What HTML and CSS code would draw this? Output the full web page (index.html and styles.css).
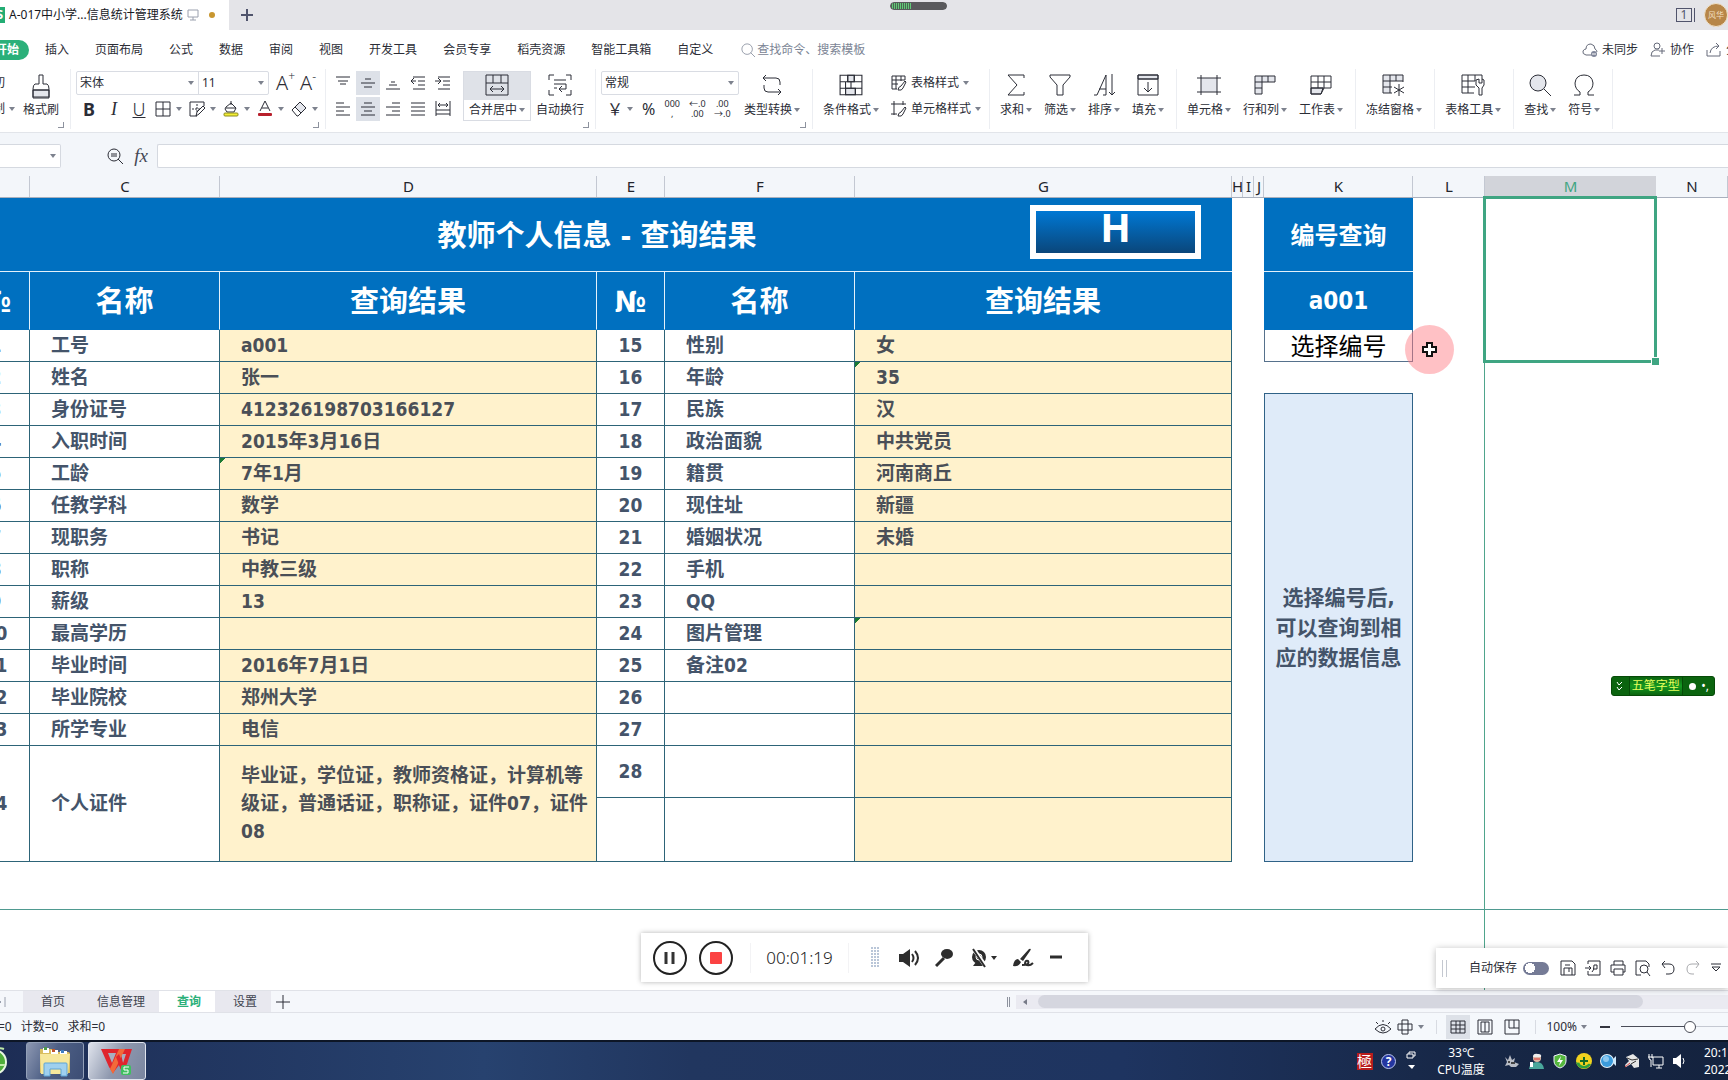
FILE: index.html
```html
<!DOCTYPE html>
<html lang="zh-CN">
<head>
<meta charset="utf-8">
<title>A-017中小学教师信息统计管理系统</title>
<link rel="stylesheet" href="styles.css">
</head>
<body>
<svg class="defs" aria-hidden="true">
  <symbol id="brush" viewBox="0 0 22 26"><path fill="#e4e6ec" d="M3 17h16v7H3z"/><path d="M9 2h4v9h4q2 1 2 5v9H3v-9q0-4 2-5h4zM3 17h16"/></symbol>
  <symbol id="borders" viewBox="0 0 16 16"><path d="M1 1h14v14H1zM8 1v14M1 8h14"/></symbol>
  <symbol id="cellpen" viewBox="0 0 16 16"><path d="M8 15H1V1h14v4"/><path stroke-dasharray="2 1" d="M8 3v9M3 8h8"/><path fill="#fff" d="M7 15l1-4 6-6 2 2-6 6z"/></symbol>
  <symbol id="bucket" viewBox="0 0 16 16"><path d="M8 0v4M3 6l5-4 5 5-2 4H4L2 8zM3 7h10"/><rect x="1" y="12" width="14" height="3" rx="1" fill="#f3ee35" stroke="#8c8a20"/></symbol>
  <symbol id="fontcolor" viewBox="0 0 16 16"><path d="M3 10L8 0l5 10M5 7h6"/><rect x="1" y="12" width="14" height="3" rx="1" fill="#b8202c" stroke="none"/></symbol>
  <symbol id="eraser" viewBox="0 0 16 16"><path fill="#e4e6ec" d="M4 6l5-5 6 6-5 5z"/><path d="M1 9l8-8 6 6-8 8H6zM4 6l6 6"/></symbol>
  <symbol id="al-top" viewBox="0 0 16 16"><path d="M1 2h14M3 6h10M5 9h6"/></symbol>
  <symbol id="al-mid" viewBox="0 0 16 16"><path d="M5 4h6M1 8h14M4 12h8"/></symbol>
  <symbol id="al-bot" viewBox="0 0 16 16"><path d="M6 7h4M4 10h8M1 14h14"/></symbol>
  <symbol id="outdent" viewBox="0 0 16 16"><path d="M3 2h12M8 6h7M8 10h7M3 14h12M1 6h5M4 3L1 6l3 3"/></symbol>
  <symbol id="indent" viewBox="0 0 16 16"><path d="M3 2h12M8 6h7M8 10h7M3 14h12M0 6h5M3 3l3 3-3 3"/></symbol>
  <symbol id="al-left" viewBox="0 0 16 16"><path d="M1 2h8M1 6h14M1 10h8M1 14h14"/></symbol>
  <symbol id="al-cen" viewBox="0 0 16 16"><path d="M4 2h8M1 6h14M4 10h8M1 14h14"/></symbol>
  <symbol id="al-right" viewBox="0 0 16 16"><path d="M7 2h8M1 6h14M7 10h8M1 14h14"/></symbol>
  <symbol id="al-just" viewBox="0 0 16 16"><path d="M1 2h14M1 6h14M1 10h14M1 14h14"/></symbol>
  <symbol id="al-dist" viewBox="0 0 16 16"><path d="M1 0v15M15 0v15M3 4h10M5 2L3 4l2 2M11 2l2 2-2 2M1 9h14M1 13h14"/></symbol>
  <symbol id="merge" viewBox="0 0 24 22"><path d="M1 1h22v20H1zM1 9h22M8 1v8M16 1v8M5 15h14M8 12l-3 3 3 3M16 12l3 3-3 3"/></symbol>
  <symbol id="wrap" viewBox="0 0 24 22"><path d="M1 6V1h5M18 1h5v5M1 16v5h5M18 21h5v-5M6 6h12M6 10h12v5h-6M6 14h3M14 12l-3 3 3 3"/></symbol>
  <symbol id="convert" viewBox="0 0 22 22"><path d="M5 1L2 4l3 3M2 4h13q4 0 4 4v3M17 21l3-3-3-3M20 18H7q-4 0-4-4v-3"/></symbol>
  <symbol id="condfmt" viewBox="0 0 22 20"><path fill="#e4e6ec" d="M8 1h6v6H8zM6 13h9v6H6z"/><path d="M1 1h20v18H1zM1 7h20M1 13h20M8 1v6M14 1v6M6 7v6M11 7v6M6 13v6M15 13v6"/></symbol>
  <symbol id="tblstyle" viewBox="0 0 16 16"><path d="M6 14H1V1h13v4M1 5h13M1 9h6M5 1v13M10 1v5"/><path fill="#fff" d="M7 15q0-3 3-4l4-5 1 1-3 6q-1 3-5 2z"/></symbol>
  <symbol id="cellstyle" viewBox="0 0 16 16"><path d="M3 0v14M0 3h15M12 0v4M0 13h6"/><path fill="#fff" d="M7 15q0-3 3-4l4-5 1 1-3 6q-1 3-5 2z"/></symbol>
  <symbol id="sum" viewBox="0 0 22 22"><path d="M19 4V1H3l9 10L3 21h16v-3"/></symbol>
  <symbol id="filter" viewBox="0 0 22 22"><path d="M1 1h20v2l-7 8v10H8V11L1 3z"/></symbol>
  <symbol id="sort" viewBox="0 0 22 22"><path d="M1 21h3M4 21L13 1v20h-3M6 15h7M19 0v21M16 18l3 3 3-3"/></symbol>
  <symbol id="fill" viewBox="0 0 22 22"><path fill="#e4e6ec" d="M1 1h20v4H1z"/><path d="M1 1h20v20H1zM1 5h20M11 8v10M7 14l4 4 4-4"/></symbol>
  <symbol id="cell" viewBox="0 0 24 22"><path fill="#e4e6ec" stroke="none" d="M4 4h16v14H4z"/><path d="M4 1v20M20 1v20M0 4h24M0 18h24"/></symbol>
  <symbol id="rowcol" viewBox="0 0 22 22"><path fill="#e4e6ec" d="M1 2h20v6H8v12H1z"/><path d="M1 8h7M1 14h7M8 2v6M14 2v6"/></symbol>
  <symbol id="worksheet" viewBox="0 0 22 22"><path fill="#e4e6ec" d="M1 14h12l-2 6H1z"/><path d="M1 2h20v12H1zM1 14v6h10l3-6M1 8h20M8 2v12M14 2v12"/></symbol>
  <symbol id="freeze" viewBox="0 0 24 22"><path fill="#e4e6ec" stroke="none" d="M1 1h20v6H8v12H1z"/><path d="M21 8V1H1v18h9M1 7h20M1 13h9M8 1v18M14 1v6M17 10v12M12 13l10 6M12 19l10-6"/></symbol>
  <symbol id="tbltool" viewBox="0 0 24 22"><path d="M21 5V1H1v18h12M1 7h13M1 13h13M7 1v18M14 1v6"/><path fill="#fff" d="M15 6v5l3 3v7h3v-7l2-3V6l-2-1v4h-3V5z"/></symbol>
  <symbol id="find" viewBox="0 0 22 22"><circle cx="9" cy="9" r="8" fill="#e4e6ec"/><path d="M15 15l7 7"/></symbol>
  <symbol id="omega" viewBox="0 0 22 22"><path d="M1 21h6v-3Q2 15 2 9q1-8 9-8t9 8q0 6-5 9v3h6"/></symbol>
  <symbol id="lens" viewBox="0 0 16 16"><circle cx="7" cy="7" r="6"/><path d="M11 11l5 5"/></symbol>
  <symbol id="lens-eq" viewBox="0 0 16 16"><circle cx="7" cy="7" r="6"/><path d="M11 11l5 5M4 6h6M4 8h6"/></symbol>
  <symbol id="cloud" viewBox="0 0 16 16"><path d="M10 13H4Q0 12 1 9q1-2 3-2 0-5 5-5 4 1 4 5 2 1 2 3"/><circle cx="12" cy="12" r="3" fill="#80869a" stroke="none"/><path stroke="#fff" d="M10 12h4"/></symbol>
  <symbol id="person" viewBox="0 0 16 16"><circle cx="7" cy="4" r="3"/><path d="M10 14H1q0-5 4-6h4M12 6v6M9 9h6"/></symbol>
  <symbol id="share" viewBox="0 0 16 16"><path d="M1 8v6h13V9M4 11q1-7 9-7M10 1l3 3-3 3"/></symbol>
  <symbol id="save" viewBox="0 0 16 16"><path d="M1 1h11l3 3v11H1zM4 15V8h8v7M5 5h5M9 8v4"/></symbol>
  <symbol id="pdf" viewBox="0 0 16 16"><path d="M3 4V1h12v14H3v-4M0 8h6M4 6l2 2-2 2M7 12q2-1 2-7h3v4H8"/></symbol>
  <symbol id="print" viewBox="0 0 16 16"><path d="M4 5V1h9v4M4 12H1V5h14v7h-2M4 9h9v6H4z"/></symbol>
  <symbol id="preview" viewBox="0 0 16 16"><path d="M6 15H1V1h10l3 3v3"/><circle cx="9" cy="9" r="4"/><path d="M12 12l3 4"/></symbol>
  <symbol id="undo" viewBox="0 0 16 16"><path d="M5 1L2 4l3 4M2 4h7q5 0 5 5t-5 5H6"/></symbol>
  <symbol id="redo" viewBox="0 0 16 16"><path d="M11 1l3 3-3 4M14 4H7q-5 0-5 5t5 5h2"/></symbol>
  <symbol id="eye" viewBox="0 0 18 16"><path d="M1 10q8-9 16 0-8 8-16 0zM2 3l2 2M9 1v2M16 3l-2 2"/><circle cx="9" cy="10" r="2"/></symbol>
  <symbol id="cross" viewBox="0 0 16 16"><path d="M5 1h6v14H5zM1 5h14v6H1z"/></symbol>
  <symbol id="v-grid" viewBox="0 0 16 16"><path d="M1 2h14v12H1zM1 6h14M1 10h14M6 2v12M10 2v12"/></symbol>
  <symbol id="v-page" viewBox="0 0 16 16"><path d="M1 1h14v14H1zM4 3h8v10H4zM8 3v10"/></symbol>
  <symbol id="v-break" viewBox="0 0 16 16"><path d="M1 1h14v14H1zM5 1v8h10M10 1v8"/></symbol>
</svg>

<header class="titlebar">
  <div class="doctab">
    <span class="doclogo">S</span>
    <span class="docname">A-017中小学...信息统计管理系统</span>
    <svg class="ic s12 faint" viewBox="0 0 12 12"><path d="M1 1h10v7H1zM6 8v3M3 11h6"/></svg>
    <span class="unsaved"></span>
  </div>
  <button class="newtab" aria-label="新建"><svg class="ic s12 thick" viewBox="0 0 12 12"><path d="M6 0v12M0 6h12"/></svg></button>
  <span class="level"></span>
  <span class="wincount">1</span>
  <span class="avatar">风华</span>
</header>

<nav class="menu">
  <button class="start">开始</button>
  <button>插入</button><button>页面布局</button><button>公式</button><button>数据</button><button>审阅</button><button>视图</button><button>开发工具</button><button>会员专享</button><button>稻壳资源</button><button>智能工具箱</button><button>自定义</button>
  <button class="search"><svg class="ic s14"><use href="#lens"/></svg>查找命令、搜索模板</button>
  <div class="menu-right">
    <button><svg class="ic s16"><use href="#cloud"/></svg>未同步</button>
    <button><svg class="ic s16"><use href="#person"/></svg>协作</button>
    <button><svg class="ic s16"><use href="#share"/></svg>分享</button>
  </div>
</nav>

<section class="ribbon">
  <div class="group clip corner">
    <div class="stack"><button>剪切</button><button>复制<i class="dd"></i></button></div>
    <button class="big"><svg class="ic i26"><use href="#brush"/></svg><span>格式刷</span></button>
  </div>
  <div class="group font corner">
    <div class="line">
      <div class="combo"><label class="sel"><select class="face" aria-label="字体"><option>宋体</option></select></label><label class="sel"><select class="size" aria-label="字号"><option>11</option></select></label></div>
      <button class="sq grow">A<sup>+</sup></button><button class="sq grow">A<sup>-</sup></button>
    </div>
    <div class="line tools">
      <button class="sq bold">B</button><button class="sq ital">I</button><button class="sq under">U</button>
      <button class="drop"><svg class="ic s16"><use href="#borders"/></svg><i class="dd"></i></button>
      <button class="drop"><svg class="ic s16"><use href="#cellpen"/></svg><i class="dd"></i></button>
      <button class="drop"><svg class="ic s16"><use href="#bucket"/></svg><i class="dd"></i></button>
      <button class="drop"><svg class="ic s16"><use href="#fontcolor"/></svg><i class="dd"></i></button>
      <button class="drop"><svg class="ic s16"><use href="#eraser"/></svg><i class="dd"></i></button>
    </div>
  </div>
  <div class="group align corner">
    <div class="aligns">
      <button><svg class="ic s16"><use href="#al-top"/></svg></button><button class="on"><svg class="ic s16"><use href="#al-mid"/></svg></button><button><svg class="ic s16"><use href="#al-bot"/></svg></button><button><svg class="ic s16"><use href="#outdent"/></svg></button><button><svg class="ic s16"><use href="#indent"/></svg></button>
      <button><svg class="ic s16"><use href="#al-left"/></svg></button><button class="on"><svg class="ic s16"><use href="#al-cen"/></svg></button><button><svg class="ic s16"><use href="#al-right"/></svg></button><button><svg class="ic s16"><use href="#al-just"/></svg></button><button><svg class="ic s16"><use href="#al-dist"/></svg></button>
    </div>
    <button class="big merged"><svg class="ic i22"><use href="#merge"/></svg><span>合并居中<i class="dd"></i></span></button>
    <button class="big"><svg class="ic i22"><use href="#wrap"/></svg><span>自动换行</span></button>
  </div>
  <div class="group number corner">
    <div>
      <div class="line"><div class="combo"><label class="sel"><select class="fmt" aria-label="数字格式"><option>常规</option></select></label></div></div>
      <div class="line nums"><button class="yen">￥<i class="dd"></i></button><button class="pct">%</button><button class="dec">000<br>,</button><button class="dec">←.0<br>.00</button><button class="dec">.00<br>→.0</button></div>
    </div>
    <button class="big"><svg class="ic i22"><use href="#convert"/></svg><span>类型转换<i class="dd"></i></span></button>
  </div>
  <div class="group style">
    <button class="big"><svg class="ic i22"><use href="#condfmt"/></svg><span>条件格式<i class="dd"></i></span></button>
    <div class="stack"><button><svg class="ic s16"><use href="#tblstyle"/></svg>表格样式<i class="dd"></i></button><button><svg class="ic s16"><use href="#cellstyle"/></svg>单元格样式<i class="dd"></i></button></div>
  </div>
  <div class="group">
    <button class="big"><svg class="ic i22"><use href="#sum"/></svg><span>求和<i class="dd"></i></span></button>
    <button class="big"><svg class="ic i22"><use href="#filter"/></svg><span>筛选<i class="dd"></i></span></button>
    <button class="big"><svg class="ic i22"><use href="#sort"/></svg><span>排序<i class="dd"></i></span></button>
    <button class="big"><svg class="ic i22"><use href="#fill"/></svg><span>填充<i class="dd"></i></span></button>
  </div>
  <div class="group">
    <button class="big"><svg class="ic i22"><use href="#cell"/></svg><span>单元格<i class="dd"></i></span></button>
    <button class="big"><svg class="ic i22"><use href="#rowcol"/></svg><span>行和列<i class="dd"></i></span></button>
    <button class="big"><svg class="ic i22"><use href="#worksheet"/></svg><span>工作表<i class="dd"></i></span></button>
  </div>
  <div class="group"><button class="big"><svg class="ic i22"><use href="#freeze"/></svg><span>冻结窗格<i class="dd"></i></span></button></div>
  <div class="group"><button class="big"><svg class="ic i22"><use href="#tbltool"/></svg><span>表格工具<i class="dd"></i></span></button></div>
  <div class="group">
    <button class="big"><svg class="ic i22"><use href="#find"/></svg><span>查找<i class="dd"></i></span></button>
    <button class="big"><svg class="ic i22"><use href="#omega"/></svg><span>符号<i class="dd"></i></span></button>
  </div>
</section>

<div class="formula">
  <label class="sel namebox"><select aria-label="名称框"><option></option></select></label>
  <svg class="ic s16"><use href="#lens-eq"/></svg>
  <button class="fx">fx</button>
  <input class="fxinput" type="text" aria-label="编辑栏">
</div>

<main class="sheet">
  <table class="grid">
    <colgroup><col class="c-no"><col class="c-name"><col class="c-val"><col class="c-no"><col class="c-name"><col class="c-val"><col class="c-slim"><col class="c-slim"><col class="c-slim j"><col class="c-k"><col class="c-l"><col class="c-m"><col></colgroup>
    <thead><tr class="letters"><th></th><th>C</th><th>D</th><th>E</th><th>F</th><th>G</th><th>H</th><th>I</th><th>J</th><th>K</th><th>L</th><th class="sel-col">M</th><th>N</th></tr></thead>
    <tbody>
      <tr class="r-title"><td colspan="6" class="title">教师个人信息 - 查询结果<button class="home">H</button></td><td colspan="3" rowspan="16"></td><td class="ktop">编号查询</td><td rowspan="16" class="pb"></td><td rowspan="3" class="picked"></td><td rowspan="16"></td></tr>
      <tr class="r-head"><th>№</th><th>名称</th><th>查询结果</th><th>№</th><th>名称</th><th>查询结果</th><td class="kval">a001</td></tr>
      <tr><td class="n">1</td><td class="f">工号</td><td class="v">a001</td><td class="n">15</td><td class="f">性别</td><td class="v">女</td><td class="kpick">选择编号</td></tr>
      <tr><td class="n">2</td><td class="f">姓名</td><td class="v">张一</td><td class="n">16</td><td class="f">年龄</td><td class="v flag">35</td><td class="kgap"></td><td rowspan="13"></td></tr>
      <tr><td class="n">3</td><td class="f">身份证号</td><td class="v">412326198703166127</td><td class="n">17</td><td class="f">民族</td><td class="v">汉</td><td class="knote" rowspan="13">选择编号后,<br>可以查询到相<br>应的数据信息</td></tr>
      <tr><td class="n">4</td><td class="f">入职时间</td><td class="v">2015年3月16日</td><td class="n">18</td><td class="f">政治面貌</td><td class="v">中共党员</td></tr>
      <tr><td class="n">5</td><td class="f">工龄</td><td class="v flag">7年1月</td><td class="n">19</td><td class="f">籍贯</td><td class="v">河南商丘</td></tr>
      <tr><td class="n">6</td><td class="f">任教学科</td><td class="v">数学</td><td class="n">20</td><td class="f">现住址</td><td class="v">新疆</td></tr>
      <tr><td class="n">7</td><td class="f">现职务</td><td class="v">书记</td><td class="n">21</td><td class="f">婚姻状况</td><td class="v">未婚</td></tr>
      <tr><td class="n">8</td><td class="f">职称</td><td class="v">中教三级</td><td class="n">22</td><td class="f">手机</td><td class="v"></td></tr>
      <tr><td class="n">9</td><td class="f">薪级</td><td class="v">13</td><td class="n">23</td><td class="f">QQ</td><td class="v"></td></tr>
      <tr><td class="n">10</td><td class="f">最高学历</td><td class="v"></td><td class="n">24</td><td class="f">图片管理</td><td class="v flag"></td></tr>
      <tr><td class="n">11</td><td class="f">毕业时间</td><td class="v">2016年7月1日</td><td class="n">25</td><td class="f">备注02</td><td class="v"></td></tr>
      <tr><td class="n">12</td><td class="f">毕业院校</td><td class="v">郑州大学</td><td class="n">26</td><td class="f"></td><td class="v"></td></tr>
      <tr><td class="n">13</td><td class="f">所学专业</td><td class="v">电信</td><td class="n">27</td><td class="f"></td><td class="v"></td></tr>
      <tr class="r-28"><td class="n" rowspan="2">14</td><td class="f" rowspan="2">个人证件</td><td class="v" rowspan="2">毕业证，学位证，教师资格证，计算机等级证，普通话证，职称证，证件07，证件08</td><td class="n">28</td><td class="f"></td><td class="v"></td></tr>
      <tr class="r-29"><td class="n"></td><td class="f"></td><td class="v"></td><td colspan="3"></td><td class="pb"></td><td></td><td></td></tr>
      <tr class="r-end"><td colspan="10"></td><td class="pb"></td><td colspan="2"></td></tr>
      <tr class="r-out"><td colspan="10"></td><td class="pb"></td><td colspan="2"></td></tr>
    </tbody>
  </table>

  <div class="pointer"><svg width="18" height="18" viewBox="0 0 18 18"><path fill="#fff" stroke="#111" stroke-width="2" d="M6 2h5v4h4v5h-4v4H6v-4H2V6h4z"/></svg></div>
  <div class="ime"><svg width="7" height="11" viewBox="0 0 7 11" fill="none" stroke="#fff"><path d="M1 1l2 3 3-3M1 6l2 3 3-3"/></svg><b>五笔字型</b><i></i><span>•,</span></div>
</main>

<div class="recorder">
  <button class="round" aria-label="暂停"><svg width="12" height="14" viewBox="0 0 12 14"><path d="M2 1v12M9 1v12" stroke="#333" stroke-width="3"/></svg></button>
  <button class="round" aria-label="停止"><span class="stop"></span></button>
  <time>00:01:19</time>
  <span class="dots"></span>
  <div class="rec-tools">
    <button><svg width="22" height="20" viewBox="0 0 22 20"><path fill="#2d2d2d" d="M1 6h4l7-5v18l-7-5H1z"/><path fill="none" stroke="#2d2d2d" stroke-width="2" d="M14 6q3 4 0 8M17 3q6 7 0 14"/></svg></button>
    <button><svg width="20" height="20" viewBox="0 0 20 20"><ellipse cx="12" cy="6" rx="6" ry="5" fill="#2d2d2d"/><path d="M5 5q1 6 9 7" stroke="#fff" fill="none"/><path d="M9 10l-8 8" stroke="#2d2d2d" stroke-width="3"/></svg></button>
    <button><svg width="18" height="20" viewBox="0 0 18 20"><circle cx="9" cy="9" r="7" fill="#2d2d2d"/><circle cx="9" cy="9" r="3" fill="#2d2d2d" stroke="#fff"/><path fill="#2d2d2d" d="M3 18l3-4h6l3 4z"/><path d="M3 0l13 19" stroke="#fff" stroke-width="4"/><path d="M3 1l12 18" stroke="#2d2d2d" stroke-width="2"/></svg><i class="dd dark"></i></button>
    <button><svg width="22" height="20" viewBox="0 0 22 20"><path fill="#2d2d2d" d="M17 1q3-1 1 2l-7 10-3-2zM1 18q1-7 5-7l3 3q-2 5-8 4z"/><path fill="none" stroke="#2d2d2d" stroke-width="2" d="M10 17q8 0 6-4-3-1-3 3 4 3 8-1"/></svg></button>
    <button><svg width="14" height="20" viewBox="0 0 14 20"><path d="M1 9h12" stroke="#2d2d2d" stroke-width="3"/></svg></button>
  </div>
</div>

<div class="quick">
  <span class="grip"></span>
  <label class="auto">自动保存<input type="checkbox"></label>
  <button><svg class="ic s16"><use href="#save"/></svg></button><button><svg class="ic s16"><use href="#pdf"/></svg></button><button><svg class="ic s16"><use href="#print"/></svg></button><button><svg class="ic s16"><use href="#preview"/></svg></button><button><svg class="ic s16"><use href="#undo"/></svg></button><button class="off"><svg class="ic s16"><use href="#redo"/></svg></button>
  <button><svg class="ic s12" viewBox="0 0 12 12"><path d="M1 2h10M2 5h8L6 9z"/></svg></button>
</div>

<div class="tabs">
  <span class="last"><svg class="ic s12 faint" viewBox="0 0 12 12"><path d="M1 2l4 4-4 4zM9 1v10"/></svg></span>
  <button>首页</button><button>信息管理</button><button class="cur">查询</button><button>设置</button>
  <button class="add" aria-label="新建工作表"><svg class="ic s14" viewBox="0 0 14 14"><path d="M7 0v14M0 7h14"/></svg></button>
  <span class="split"></span>
  <div class="hscroll"><i class="arrow"></i><span class="thumb"></span></div>
</div>

<footer class="status">
  <p><span>平均值=0</span><span>计数=0</span><span>求和=0</span></p>
  <div class="views">
    <button><svg class="ic i18"><use href="#eye"/></svg></button>
    <button class="drop"><svg class="ic s16"><use href="#cross"/></svg><i class="dd"></i></button>
    <span class="bar"></span>
    <button class="view on"><svg class="ic s16"><use href="#v-grid"/></svg></button><button class="view"><svg class="ic s16"><use href="#v-page"/></svg></button><button class="view"><svg class="ic s16"><use href="#v-break"/></svg></button>
    <span class="bar"></span>
    <button class="zoomval">100%<i class="dd"></i></button>
    <button class="minus" aria-label="缩小"></button>
    <input type="range" min="0" max="200" value="100" aria-label="缩放">
  </div>
</footer>

<div class="taskbar">
  <svg class="orb" width="26" height="32" viewBox="0 0 26 32"><circle cx="13" cy="17" r="12" fill="#4fae3a" stroke="#e8f7e0" stroke-width="2"/><path d="M4 20h20M14 5q4-3 9-1" stroke="#bfeaa8" stroke-width="2" fill="none"/></svg>
  <button class="task"><svg width="36" height="32" viewBox="0 0 36 32"><path fill="#d9bd5e" d="M3 4h12l2 3h14q2 0 2 2v19H3z"/><path fill="#fff" d="M6 3h6v5H6zM14 5h7v5h-7zM23 6h7v4h-7z"/><path fill="#4c9a4a" d="M7 2h3v3H7z"/><path fill="#c2572d" d="M15 4h3v3h-3z"/><path fill="#3f7fc4" d="M24 5h3v3h-3z"/><path fill="#f6e79c" d="M3 9h30l-2 20H4z"/><path fill="#9fd0ef" stroke="#5fa4d4" d="M7 31V19q0-1 1-1h21q1 0 1 1v12h-6v-7H13v7z"/></svg></button>
  <button class="task active"><svg width="36" height="32" viewBox="0 0 36 32"><path fill="#e0252d" d="M2 4h31l-5 15-5 8-3-7-6 8-4-6z"/><path fill="#a7afc0" d="M9 8h8l-4 10zM22 9h5l-3 9z"/><path fill="#f26a3a" d="M20 4h6L14 29l-3-5z"/><path fill="#e0252d" d="M17 12l6 15 3-3-6-15z"/><rect x="22" y="20" width="10" height="10" rx="2" fill="#3fbf5f"/><path d="M30 22h-5v3h4v3h-5" stroke="#fff" fill="none"/></svg></button>
  <div class="tray">
    <span class="ji">極</span><span class="help">?</span>
    <svg width="10" height="20" viewBox="0 0 10 20" fill="none" stroke="#fff"><path d="M3 3V1h6v4H7M1 3h6v4H1z"/><path fill="#fff" stroke="none" d="M2 14h7l-3 4z"/></svg>
    <p class="temp">33℃<br>CPU温度</p>
    <div class="icons">
      <svg viewBox="0 0 16 16"><path fill="#b9bdc6" d="M1 4l3 3 2-5 2 5 3-2-1 4 5 2-3 3H7l-2-2-4 1 2-4z"/><path fill="#444" d="M7 9h4v2H7zM4 8h2v2H4z"/></svg>
      <svg viewBox="0 0 16 16"><circle cx="9" cy="5" r="4" fill="#e0b9a6"/><path fill="#eee" d="M5 4q0-4 5-3 4 0 3 3z"/><path fill="#4aa79b" d="M1 16q1-7 8-7 6 0 7 7z"/><path fill="#fff" d="M2 9h3v5H2z"/><path stroke="#d33" d="M6 6h6"/></svg>
      <svg viewBox="0 0 16 16"><path fill="#55b83e" stroke="#eef" d="M8 1l6 2v5q0 5-6 7-6-2-6-7V3z"/><path fill="#fff" d="M9 3L5 9h3l-1 4 4-6H8z"/></svg>
      <svg viewBox="0 0 16 16"><circle cx="8" cy="8" r="8" fill="#f2d21f"/><path fill="#2e9e3e" d="M0 9a8 8 0 0 0 15 2q-6 0-8-4-4 4-7 2z"/><circle cx="8" cy="8" r="5" fill="#f2d21f"/><path stroke="#146b26" stroke-width="2" d="M8 4v8M4 8h8"/></svg>
      <svg viewBox="0 0 16 16"><circle cx="7" cy="8" r="7" fill="#e8f4fc"/><circle cx="7" cy="8" r="6" fill="#3b9bdc"/><circle cx="6" cy="6" r="3" fill="#8cc8f0"/><path fill="#cfe8fa" d="M13 6l3-3v10l-3-3z"/></svg>
      <svg viewBox="0 0 16 16"><path fill="#e6e6e6" d="M2 4l7-3 6 5v8l-5 1-3-4-5 3-1-2 4-4z"/><path stroke="#333" fill="none" d="M3 5l5 2 6-1M7 11l5-3"/><path stroke="#d44" d="M1 14l5-4"/></svg>
      <svg viewBox="0 0 16 16" fill="none" stroke="#fff"><path d="M5 4h10v8H5zM8 15h6M11 12v3M1 1v4q0 2 2 2v7M4 1v4M0 4h5"/></svg>
      <svg viewBox="0 0 16 16"><path fill="#fff" d="M1 5h3l5-4v14l-5-4H1z"/><path stroke="#fff" fill="none" d="M11 5q2 3 0 6"/></svg>
    </div>
    <p class="clock">20:1<br>2022</p>
  </div>
</div>
</body>
</html>
```

FILE: styles.css
```css
* { box-sizing: border-box; }
body {
  margin: 0;
  height: 100vh;
  display: flex;
  flex-direction: column;
  position: relative;
  overflow: hidden;
  background: #fff;
  color: #2b2d36;
  font: 12px/16px "Noto Sans", "Noto Sans CJK SC", sans-serif;
}
button, input, select { font: inherit; color: inherit; }
button { border: 0; padding: 0; background: none; white-space: nowrap; }
p { margin: 0; }
.defs { display: none; }
.ic { fill: none; stroke: #2b2d36; stroke-width: 1; flex: none; display: block; }
.s12 { width: 12px; height: 12px; }
.s14 { width: 14px; height: 14px; }
.s16 { width: 16px; height: 16px; }
.i18 { width: 18px; height: 16px; }
.i22 { width: 24px; height: 22px; }
.i26 { width: 22px; height: 26px; }
.faint { stroke: #9aa0ae; }
.thick { stroke-width: 2; stroke: #50546c; }
.dd { flex: none; display: inline-block; border: 3px solid transparent; border-top: 4px solid #7d828e; border-bottom: 0; }
.dd.dark { border-top-color: #2d2d2d; }

/* title bar */
.titlebar { flex: none; height: 30px; background: #e4e4e8; display: flex; align-items: center; position: relative; }
.doctab { height: 30px; width: 229px; background: #fff; display: flex; align-items: center; gap: 4px; overflow: hidden; white-space: nowrap; }
.doclogo { background: #23ad74; color: #fff; font-weight: 700; width: 16px; line-height: 16px; margin-left: -11px; text-align: right; padding-right: 2px; }
.docname { color: #16181e; }
.unsaved { width: 6px; height: 6px; border-radius: 50%; background: #c8962f; margin-left: 6px; }
.newtab { margin-left: 12px; }
.level { position: absolute; left: 890px; top: 2px; width: 57px; height: 8px; border-radius: 4px; border: 1px solid #59595c; background: linear-gradient(#59595c, #59595c) 20px 0 no-repeat, repeating-linear-gradient(90deg, #4a6650 0 1px, #62c878 1px 2px); }
.wincount { margin-left: auto; width: 16px; line-height: 12px; border: 1px solid #50546c; text-align: center; color: #50546c; box-shadow: 2px 0 0 #e4e4e8, 3px 0 0 #50546c; }
.avatar { width: 24px; height: 24px; border-radius: 50%; background: #b78648; border: 1px solid #f1e3cc; color: #f3dfc0; font-size: 8px; line-height: 22px; text-align: center; margin-left: 12px; white-space: nowrap; }

/* menu */
.menu { flex: none; height: 39px; display: flex; align-items: center; gap: 26px; overflow: hidden; }
.start { background: #2bb07a; color: #fff; font-weight: 700; padding: 0 10px; line-height: 20px; border-radius: 10px; margin: 0 -10px 0 -15px; }
.search { display: flex; align-items: center; gap: 2px; color: #7b8494; margin-left: 2px; }
.search .ic { stroke: #8d94a2; }
.menu-right { margin-left: auto; margin-right: -22px; display: flex; gap: 12px; }
.menu-right button { display: flex; align-items: center; gap: 4px; }
.menu-right .ic { stroke: #666b7a; }

/* ribbon */
.ribbon { flex: none; height: 64px; display: flex; border-bottom: 1px solid #e2e5ea; overflow: hidden; }
.group { flex: none; height: 60px; padding: 2px 12px 0 10px; border-right: 1px solid #eceef2; display: flex; gap: 12px; position: relative; }
.corner::after { content: ""; position: absolute; right: 6px; bottom: 1px; width: 5px; height: 5px; border: solid #8d929e; border-width: 0 1px 1px 0; }
.big { display: flex; flex-direction: column; align-items: center; justify-content: space-between; height: 50px; padding: 3px 0 2px; }
.big span { display: flex; align-items: center; gap: 2px; line-height: 18px; }
.clip { width: 71px; padding-left: 0; padding-right: 11px; gap: 8px; }
.clip .stack { margin-left: -19px; width: 36px; }
.clip .big { padding-top: 2px; }
.stack { display: flex; flex-direction: column; gap: 2px; }
.stack button { height: 24px; display: flex; align-items: center; gap: 4px; }
.line { display: flex; align-items: center; height: 24px; }
.combo { display: flex; border: 1px solid #d9dce3; border-radius: 2px; }
.sel { position: relative; display: block; }
.sel::after { content: ""; position: absolute; right: 4px; top: 9px; border: 3px solid transparent; border-top: 4px solid #7d828e; border-bottom: 0; }
.sel select { appearance: none; border: 0; background: none; height: 22px; padding: 0 3px; display: block; outline: 0; }
.face { width: 121px; }
.sel .size { width: 70px; border-left: 1px solid #d9dce3; }
.fmt { width: 136px; }
.font { display: block; width: 255px; padding-left: 5px; padding-right: 0; }
.grow { font-size: 20px; font-weight: 300; line-height: 20px; width: 17px; margin-left: 7px; display: flex; }
.grow sup { font-size: 12px; line-height: 8px; }
.tools { margin-top: 2px; }
.tools .sq { flex: none; width: 16px; margin: 0 4px 0 5px; font-size: 18px; line-height: 20px; }
.tools .bold { font-weight: 700; }
.tools .ital { font-style: italic; font-family: "Liberation Serif", serif; }
.tools .under { text-decoration: underline; font-weight: 300; margin-right: 8px; }
.drop { flex: none; display: flex; align-items: center; gap: 5px; }
.tools .drop { margin-right: 7px; }
.tools .drop:last-child { margin-right: 0; }
.align { gap: 5px; padding: 2px 10px 0 5px; width: 270px; }
.aligns { display: grid; grid-template-columns: repeat(5, 24px); gap: 2px 1px; align-content: start; width: 127px; }
.aligns button { height: 24px; display: flex; align-items: center; justify-content: center; }
.aligns .on, .view.on { background: #dde1e8; }
.merged { width: 68px; border: 1px solid #d9dce3; background: linear-gradient(#dfe2e8 28px, #fff 28px); padding: 2px 0 1px; }
.number { width: 217px; gap: 5px; padding-left: 5px; }
.nums { margin-top: 2px; gap: 5px; padding-left: 6px; }
.yen, .pct { font-size: 16px; display: flex; align-items: center; line-height: 20px; gap: 4px; }
.pct { margin: 0 2px 0 4px; }
.dec { font-size: 9px; line-height: 10px; height: 20px; width: 20px; }
.style { width: 177px; padding-left: 10px; }

/* formula bar */
.formula { flex: none; height: 43px; padding-top: 2px; background: #f3f6fa; display: flex; align-items: center; }
.namebox { width: 61px; height: 24px; background: #fff; border: 1px solid #d5d9e0; border-left: 0; border-radius: 0 2px 2px 0; margin-right: 46px; }
.namebox select { width: 60px; }
.fx { font: italic 19px/20px "Liberation Serif", serif; width: 16px; margin: 0 8px 0 10px; color: #444854; }
.fxinput { flex: 1; height: 24px; border: 1px solid #d5d9e0; border-right: 0; background: #fff; border-radius: 2px 0 0 2px; outline: 0; padding: 0 6px; }

/* sheet */
.sheet { flex: 1; min-height: 0; overflow: hidden; position: relative; }
.grid { table-layout: fixed; border-collapse: separate; border-spacing: 0; width: calc(100% + 38px); margin-left: -38px; }
.c-no { width: 68px; }
.c-name { width: 190px; }
.c-val { width: 377px; }
.c-slim { width: 11px; }
.c-slim.j { width: 10px; }
.c-k { width: 149px; }
.c-l { width: 72px; }
.c-m { width: 171px; }
.grid td, .grid th { padding: 0; }
.grid tr { height: 32px; }
.grid .letters { height: 22px; }
.grid .letters th { background: linear-gradient(#c3c8d2, #c3c8d2) right / 1px 100% no-repeat #f3f6fa; border-bottom: 1px solid #a9b0bd; font-size: 15px; line-height: 18px; font-weight: 400; color: #22242c; padding-bottom: 2px; }
.grid .letters .sel-col { background: #d2d4da; color: #3fa582; }
.grid .r-title { height: 74px; }
.grid .r-head { height: 58px; }
.grid .r-28 { height: 52px; }
.grid .r-29 { height: 64px; }
.grid .r-end { height: 48px; }
.grid .r-out { height: 400px; }
.title, .r-head th, .ktop, .kval { background: #0070c0; color: #fff; font-weight: 700; text-align: center; border-bottom: 1px solid #e3f1fb; }
.grid { font-family: "DejaVu Sans Condensed", "Noto Sans CJK SC", sans-serif; }
.letters { font-family: "Noto Sans", sans-serif; }
.grid .title, .grid .r-head th, .grid .kpick, .grid .ktop { padding-top: 2px; }
.title { position: relative; font-size: 29px; line-height: 36px; }
.r-head th { font-size: 29px; line-height: 36px; border-right: 1px solid #e3f1fb; border-bottom-color: #0070c0; }
.grid .r-head th:nth-child(6) { border-right-color: #0070c0; }
.home { position: absolute; right: 31px; top: 7px; width: 171px; height: 54px; border: 6px solid #fff; background: linear-gradient(#0078d4, #0a467a); color: #fff; font: 700 40px/32px "Noto Sans", sans-serif; padding-bottom: 10px; }
.n, .f, .v { font-size: 19px; line-height: 28px; font-weight: 700; color: #44546a; border-right: 1px solid #2d6478; border-bottom: 1px solid #2d6478; }
.n { text-align: center; }
.grid .n, .grid .f, .grid .v { padding-bottom: 1px; }
.grid .f { padding-left: 21px; }
.grid .v { padding-left: 21px; background: #fff2cc; color: #4a4f57; }
.grid .flag { background: linear-gradient(135deg, #1c7a34 4px, transparent 4px) #fff2cc; }
.ktop, .kval { font-size: 24px; line-height: 32px; }
.kval { border-bottom-color: #0070c0; }
.kpick { font-size: 24px; line-height: 28px; color: #000; text-align: center; border: 1px solid #56718c; border-top: 0; }
.kgap { border-bottom: 1px solid #2f6287; }
.knote { background: #dfebf9; border: 1px solid #2f6287; border-top: 0; color: #44546a; font-size: 21px; line-height: 30px; font-weight: 700; text-align: center; }
.pb { border-right: 1px solid #4fa58c; }
.picked { position: relative; }
.picked::before { content: ""; position: absolute; inset: -2px -1px -1px -2px; border: 3px solid #3fa582; }
.picked::after { content: ""; position: absolute; right: -3px; bottom: -3px; width: 7px; height: 7px; background: #3fa582; border: solid #fff; border-width: 1px 0 0 1px; }
.r-end td { border-bottom: 1px solid #4f9a90; }
.pointer { position: absolute; left: 1405px; top: 149px; width: 49px; height: 49px; border-radius: 50%; background: rgba(255, 120, 128, .46); display: flex; align-items: center; justify-content: center; }
.ime { position: absolute; right: 13px; top: 500px; width: 104px; height: 20px; border-radius: 3px; background: #0b640f; border: 1px solid #064a08; color: #fff; display: flex; align-items: center; justify-content: space-between; padding: 0 5px 0 4px; }
.ime b { font-weight: 400; color: #e6ff5c; line-height: 18px; padding: 0 2px; border: solid #064a08; border-width: 0 1px; background: linear-gradient(#0b640f, #159a22, #0b640f); }
.ime i { width: 7px; height: 7px; border-radius: 50%; background: #fff; }

/* floating bars */
.recorder { position: absolute; left: 641px; bottom: 98px; width: 447px; height: 49px; background: #fff; box-shadow: 0 0 5px rgba(0, 0, 0, .3); display: flex; align-items: center; padding-left: 12px; }
.round { width: 34px; height: 34px; border: 2px solid #222; border-radius: 50%; display: flex; align-items: center; justify-content: center; margin-right: 12px; }
.stop { width: 12px; height: 12px; border-radius: 1px; background: #fb4242; }
.recorder time { font-size: 17px; line-height: 30px; width: 99px; text-align: center; margin-left: 5px; border: solid #f3f3f5; border-width: 0 1px; color: #222; font-weight: 300; }
.dots { width: 9px; height: 21px; margin: 0 18px 0 22px; background: radial-gradient(circle at 1px 1px, #b9c6d8 1px, transparent 1px) 0 0 / 3px 3px; }
.rec-tools { display: flex; gap: 15px; }
.rec-tools button { display: flex; align-items: center; gap: 3px; }
.quick { position: absolute; right: 0; bottom: 92px; width: 292px; height: 40px; background: #fff; box-shadow: 0 1px 7px rgba(0, 0, 0, .28); display: flex; align-items: center; gap: 9px; padding-left: 6px; }
.grip { width: 5px; height: 17px; border: solid #c4c8d0; border-width: 0 1px; margin-right: 13px; }
.auto { display: flex; align-items: center; gap: 6px; margin-right: 2px; }
.auto input { appearance: none; margin: 0; width: 26px; height: 13px; border-radius: 7px; background: radial-gradient(circle at 7px 6px, #fff 5px, transparent 5px) #757b96; }
.off { opacity: .4; }

/* sheet tabs */
.tabs { flex: none; height: 23px; background: #f5f7fb; border: solid #e0e2e8; border-width: 1px 0; display: flex; align-items: center; }
.last { width: 23px; padding-left: 0; }
.last svg { margin-left: -4px; }
.tabs button { height: 21px; padding: 0 14px 0 18px; background: #e8e8ef; color: #40444f; }
.tabs .cur { background: #fff; color: #2bb07a; font-weight: 700; }
.tabs .add { background: none; padding: 0 5px; }
.split { margin-left: auto; width: 3px; height: 10px; border: solid #8d929e; border-width: 0 1px; }
.hscroll { flex: none; width: 712px; max-width: 50%; margin-left: 6px; height: 14px; background: #eaeaf1; display: flex; align-items: center; }
.arrow { border: 3px solid transparent; border-right: 4px solid #777b88; border-left: 0; margin: 0 11px 0 7px; }
.thumb { width: 85%; height: 13px; border-radius: 7px; background: #d5d6df; }

/* status bar */
.status { flex: none; height: 27px; background: #f5f8fc; display: flex; align-items: center; justify-content: space-between; }
.status p { display: flex; gap: 9px; margin-left: -38px; white-space: nowrap; }
.views { display: flex; align-items: center; gap: 5px; }
.bar { width: 1px; height: 14px; background: #d8dbe2; margin: 0 5px 0 7px; }
.view { width: 24px; height: 24px; display: flex; align-items: center; justify-content: center; margin: 0 -1px; }
.zoomval { display: flex; align-items: center; gap: 4px; }
.minus { width: 10px; height: 2px; background: #33353f; margin: 0 6px 0 8px; }
.views input { appearance: none; width: 137px; height: 14px; margin: 0 -30px 0 0; background: linear-gradient(90deg, #4a4d58 50%, #c5c9d2 50%) center / 100% 1px no-repeat; }
.views input::-webkit-slider-thumb { appearance: none; width: 12px; height: 12px; border-radius: 50%; background: #fff; border: 1px solid #4a4d58; }

/* taskbar */
.taskbar { flex: none; height: 40px; border-top: 2px solid #0d1626; background: linear-gradient(90deg, #1d2d55, #27426f 28%, #21365f 40%, #1e3460 65%, #172746 85%, #14233f); display: flex; align-items: center; overflow: hidden; color: #fff; }
.orb { margin-left: -19px; flex: none; }
.task { width: 58px; height: 38px; border: 1px solid #93a0b8; border-radius: 3px; background: linear-gradient(115deg, #8d98b2, #4d5f85 45%, #3c4d74); display: flex; align-items: center; justify-content: center; margin-left: 19px; }
.task.active { margin-left: 4px; border-color: #dfe4ee; background: linear-gradient(115deg, #dfe3ec, #8e98ae 50%, #7a86a0); }
.tray { margin-left: auto; display: flex; align-items: center; }
.ji { background: #b71c1c; font-size: 15px; line-height: 17px; width: 16px; }
.help { width: 15px; height: 15px; border-radius: 50%; background: #2436a0; border: 1px solid #bcc6ee; line-height: 13px; text-align: center; font-weight: 700; margin: 0 10px 0 8px; }
.temp, .clock { line-height: 17px; white-space: nowrap; }
.temp { text-align: center; width: 52px; margin: 0 17px 0 19px; }
.icons { display: flex; gap: 8px; }
.icons svg { width: 16px; height: 16px; }
.clock { width: 24px; margin-left: 16px; overflow: hidden; }
```
